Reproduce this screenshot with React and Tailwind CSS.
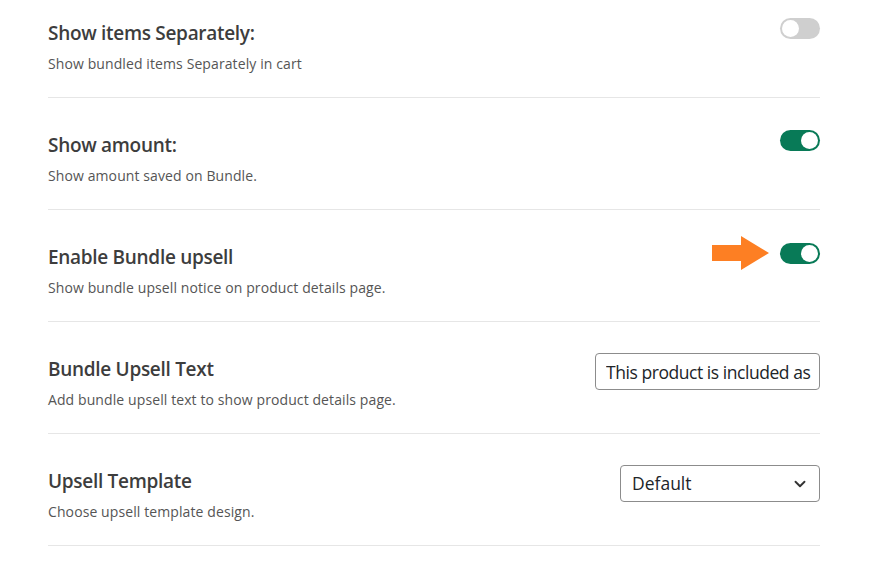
import { ChevronDown } from 'lucide-react';

const font = { fontFamily: '"Open Sans", "Noto Sans", sans-serif' };

function Toggle({ on }) {
    return (
        <div
            className={`w-[40px] h-[21px] rounded-full p-[2px] flex items-center ${
                on ? 'bg-[#087a57] justify-end' : 'bg-[#cfcfcf] justify-start'
            }`}
        >
            <div className="w-[17px] h-[17px] rounded-full bg-white" />
        </div>
    );
}

function Arrow() {
    return (
        <svg width="57" height="34" viewBox="0 0 57 34" className="mr-[11px]">
            <polygon points="0,9 29,9 29,0 57,17 29,34 29,25 0,25" fill="#fd7f23" />
        </svg>
    );
}

function Row({ title, desc, children, first }) {
    return (
        <div
            className={`flex justify-between border-b border-[#e6e6e6] ${
                first ? 'h-[98px] pt-[20px]' : 'h-[112px] pt-[34px]'
            }`}
        >
            <div>
                <h3 className="text-[19px] font-semibold text-[#3d3d3d] leading-[26px] tracking-[-0.3px]">{title}</h3>
                <p className="text-[14px] text-[#555555] mt-[7px] tracking-[0.1px]">{desc}</p>
            </div>
            <div className="flex items-start">{children}</div>
        </div>
    );
}

export default function App() {
    return (
        <div className="bg-white w-[878px] h-[577px] overflow-hidden" style={font}>
            <div className="ml-[48px] w-[772px]">
                <Row first title="Show items Separately:" desc="Show bundled items Separately in cart">
                    <div className="mt-[-2px]">
                        <Toggle on={false} />
                    </div>
                </Row>
                <Row title="Show amount:" desc="Show amount saved on Bundle.">
                    <div className="mt-[-2px]">
                        <Toggle on />
                    </div>
                </Row>
                <Row title="Enable Bundle upsell" desc="Show bundle upsell notice on product details page.">
                    <div className="flex items-center mt-[-8px]">
                        <Arrow />
                        <Toggle on />
                    </div>
                </Row>
                <Row title="Bundle Upsell Text" desc="Add bundle upsell text to show product details page.">
                    <input
                        readOnly
                        value="This product is included as part of a bundle"
                        className="mt-[-3px] w-[225px] h-[37px] border border-[#8c8c8c] rounded-[4px] pl-[10px] pr-[8px] text-[17.5px] tracking-[-0.45px] text-[#212529] outline-none"
                        style={font}
                    />
                </Row>
                <Row title="Upsell Template" desc="Choose upsell template design.">
                    <div className="mt-[-3px] w-[200px] h-[37px] border border-[#8c8c8c] rounded-[4px] pl-[11px] pr-[10px] flex items-center justify-between">
                        <span className="text-[17.5px] text-[#212529]">Default</span>
                        <ChevronDown className="w-[18px] h-[18px] text-[#333]" strokeWidth={2.5} />
                    </div>
                </Row>
            </div>
        </div>
    );
}
